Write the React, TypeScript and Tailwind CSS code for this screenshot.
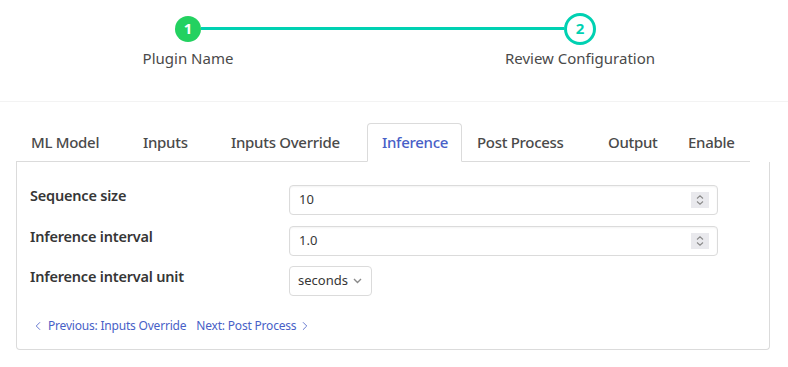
import React from "react";
import { ChevronLeft, ChevronRight } from "lucide-react";

const tabs = [
  { label: "ML Model", w: "w-[112px]" },
  { label: "Inputs", w: "w-[88px]" },
  { label: "Inputs Override", w: "w-[151px]" },
  { label: "Inference", w: "w-[95px]", active: true },
  { label: "Post Process", w: "w-[131px]" },
  { label: "Output", w: "w-[80px]" },
  { label: "Enable", w: "w-[76px]" },
];

function Spinner() {
  return (
    <div className="w-[18px] h-[16px] bg-[#e9e9ed] flex items-center justify-center">
      <svg width="10" height="12" viewBox="0 0 10 12" fill="none" stroke="#8a8a8a" strokeWidth="1.1">
        <path d="M2 4.5 L5 1.8 L8 4.5" />
        <path d="M2 7.5 L5 10.2 L8 7.5" />
      </svg>
    </div>
  );
}

function NumberField({ value }: { value: string }) {
  return (
    <div className="w-[429px] h-[30px] border border-[#dbdbdb] rounded-[4px] flex items-center pl-[9px] pr-[8px] shadow-[inset_0_1px_2px_rgba(10,10,10,0.05)]">
      <span className="flex-1 text-[13px] text-[#363636]">{value}</span>
      <Spinner />
    </div>
  );
}

export default function App() {
  return (
    <div className="w-[788px] h-[367px] bg-white text-[#4a4a4a] font-['Noto_Sans',sans-serif] overflow-hidden">
      <div className="h-[102px] border-b border-[#f3f3f3] pt-[12px]">
        <div className="flex items-center ml-[175px] w-[421px] h-[33px]">
          <div className="w-[26px] h-[26px] rounded-full bg-[#23d160] text-white flex items-center justify-center text-[15px] font-bold leading-none">
            1
          </div>
          <div className="flex-1 h-[3px] bg-[#00d1b2]" />
          <div className="w-[32px] h-[32px] rounded-full border-[3px] border-[#00d1b2] bg-white text-[#00d1b2] flex items-center justify-center text-[15px] font-bold leading-none">
            2
          </div>
        </div>
        <div className="flex mt-[1px] text-[15px] leading-[24px]">
          <div className="ml-[88px] w-[200px] text-center">Plugin Name</div>
          <div className="ml-[192px] w-[200px] text-center">Review Configuration</div>
        </div>
      </div>

      <div className="pl-[16px] pt-[21px]">
        <div className="flex w-[734px] h-[39px] border-b border-[#dbdbdb]">
          {tabs.map((t) => (
            <div
              key={t.label}
              className={
                t.active
                  ? `${t.w} h-[39px] -mb-px border border-[#dbdbdb] border-b-white rounded-t-[4px] bg-white flex items-center pl-[14px] text-[15px] tracking-[-0.3px] font-medium text-[#485fc7]`
                  : `${t.w} h-[39px] flex items-center pl-[15px] text-[15px] tracking-[-0.3px] font-medium text-[#4a4a4a]`
              }
            >
              {t.label}
            </div>
          ))}
        </div>
        <div className="w-[754px] border-x border-b border-[#dbdbdb] rounded-b-[4px] pl-[13px] pt-[23px] pb-[13px]">
          <div className="flex items-start mb-[11px]">
            <div className="w-[259px] text-[14.5px] leading-[20px] font-semibold tracking-[-0.2px] text-[#363636]">Sequence size</div>
            <NumberField value="10" />
          </div>
          <div className="flex items-start mb-[10px]">
            <div className="w-[259px] text-[14.5px] leading-[20px] font-semibold tracking-[-0.2px] text-[#363636]">Inference interval</div>
            <NumberField value="1.0" />
          </div>
          <div className="flex items-start">
            <div className="w-[259px] text-[14.5px] leading-[20px] font-semibold tracking-[-0.2px] text-[#363636]">Inference interval unit</div>
            <div className="w-[83px] h-[30px] border border-[#dbdbdb] rounded-[4px] flex items-center pl-[8px] pr-[9px]">
              <span className="flex-1 text-[13px] text-[#363636]">seconds</span>
              <svg width="9" height="6" viewBox="0 0 9 6" fill="none" stroke="#8a8a8a" strokeWidth="1.4">
                <path d="M1 1 L4.5 4.5 L8 1" />
              </svg>
            </div>
          </div>
          <div className="flex items-center h-[20px] mt-[20px] pl-[1px] text-[12px] tracking-[-0.2px] text-[#485fc7]">
            <ChevronLeft size={14} strokeWidth={1.4} />
            <span className="ml-[3px]">Previous: Inputs Override</span>
            <span className="ml-[10px]">Next: Post Process</span>
            <ChevronRight size={14} strokeWidth={1.4} className="ml-[2px]" />
          </div>
        </div>
      </div>
    </div>
  );
}
